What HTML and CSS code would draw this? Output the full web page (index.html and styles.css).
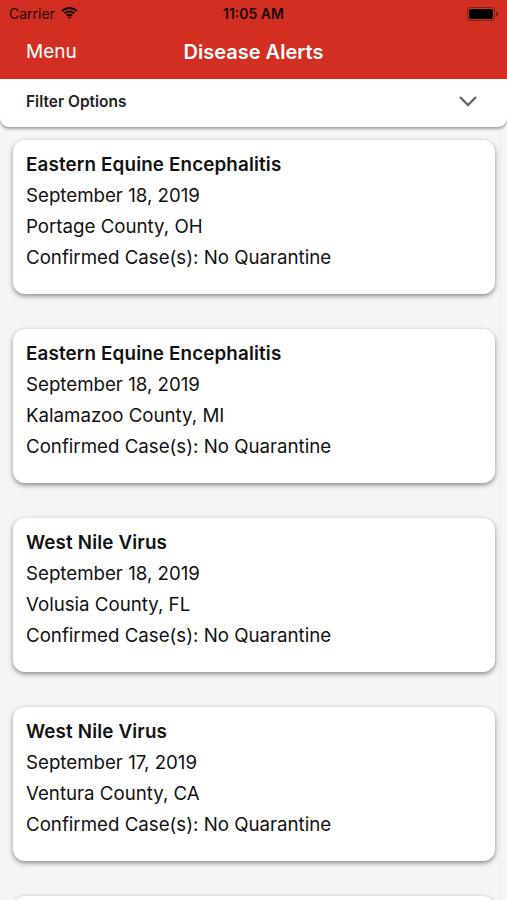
FILE: index.html
```html
<!DOCTYPE html>
<html lang="en">

<head>
    <meta charset="UTF-8">
    <meta name="viewport" content="width=device-width, initial-scale=1.0">
    <title>Disease Alerts</title>
    <link rel="stylesheet" href="styles.css">
</head>

<body>
    <div class="header">
        <div class="status-bar">
            <div class="carrier">
                Carrier
                <svg class="wifi" width="17" height="12" viewBox="0 0 17 12">
                    <path d="M8.5 2.2c2.6 0 5 1 6.8 2.7l1.4-1.5C14.5 1.3 11.6 0 8.5 0S2.5 1.3.3 3.4l1.4 1.5C3.5 3.2 5.9 2.2 8.5 2.2z" fill="#1a0a08" />
                    <path d="M8.5 5.6c1.6 0 3 .6 4.1 1.6l1.4-1.5C12.6 4.4 10.6 3.5 8.5 3.5S4.4 4.4 3 5.7l1.4 1.5c1.1-1 2.5-1.6 4.1-1.6z" fill="#1a0a08" />
                    <path d="M8.5 8.9c.8 0 1.4.3 2 .7l1.4-1.5c-.9-.8-2.1-1.3-3.4-1.3S6 7.3 5.1 8.1l1.4 1.5c.6-.4 1.2-.7 2-.7z" fill="#1a0a08" />
                    <path d="M8.5 12l1.6-1.7c-.4-.4-1-.6-1.6-.6s-1.2.2-1.6.6z" fill="#1a0a08" />
                </svg>
            </div>
            <div class="time">11:05 AM</div>
            <div class="battery">
                <span class="battery-body"><span class="battery-level"></span></span>
                <span class="battery-tip"></span>
            </div>
        </div>
        <div class="nav-bar">
            <span class="nav-menu">Menu</span>
            <span class="nav-title">Disease Alerts</span>
        </div>
    </div>

    <div class="filter">
        <span class="filter-label">Filter Options</span>
        <svg class="chevron" width="20" height="12" viewBox="0 0 20 12">
            <path d="M2 2l8 8 8-8" fill="none" stroke="#666" stroke-width="2.4" />
        </svg>
    </div>

    <div class="list">
        <div class="card">
            <div class="card-title">Eastern Equine Encephalitis</div>
            <div class="card-line">September 18, 2019</div>
            <div class="card-line">Portage County, OH</div>
            <div class="card-line">Confirmed Case(s): No Quarantine</div>
        </div>
        <div class="card">
            <div class="card-title">Eastern Equine Encephalitis</div>
            <div class="card-line">September 18, 2019</div>
            <div class="card-line">Kalamazoo County, MI</div>
            <div class="card-line">Confirmed Case(s): No Quarantine</div>
        </div>
        <div class="card">
            <div class="card-title">West Nile Virus</div>
            <div class="card-line">September 18, 2019</div>
            <div class="card-line">Volusia County, FL</div>
            <div class="card-line">Confirmed Case(s): No Quarantine</div>
        </div>
        <div class="card">
            <div class="card-title">West Nile Virus</div>
            <div class="card-line">September 17, 2019</div>
            <div class="card-line">Ventura County, CA</div>
            <div class="card-line">Confirmed Case(s): No Quarantine</div>
        </div>
        <!-- next card, only its top edge shows -->
        <div class="card"></div>
    </div>
</body>

</html>
```

FILE: styles.css
```css
body {
    margin: 0;
    padding: 0;
    background-color: #f5f5f5;
    font-family: Inter, "Liberation Sans", sans-serif;
    color: #111;
    overflow: hidden;
    height: 900px;
}

/* Red top area */
.header {
    background-color: #d22e21;
    height: 79px;
}

.status-bar {
    display: flex;
    align-items: center;
    justify-content: space-between;
    height: 27px;
    padding: 0 9px;
    color: #1a0a08;
    font-size: 14px;
}

.carrier {
    display: flex;
    align-items: center;
    gap: 6px;
    width: 100px;
}

.wifi {
    margin-top: -2px;
}

.time {
    font-weight: 600;
    font-size: 14px;
}

.battery {
    display: flex;
    align-items: center;
    justify-content: flex-end;
    width: 100px;
}

.battery-body {
    display: block;
    width: 24px;
    height: 10px;
    border: 1px solid #7a241b;
    border-radius: 3px;
    padding: 1px;
}

.battery-level {
    display: block;
    width: 100%;
    height: 100%;
    background-color: #000;
    border-radius: 2px;
}

.battery-tip {
    display: block;
    width: 2px;
    height: 4px;
    background-color: #7a241b;
    border-radius: 0 1px 1px 0;
    margin-left: 1px;
}

.nav-bar {
    position: relative;
    height: 52px;
    display: flex;
    align-items: center;
    justify-content: center;
    color: #fff;
    font-size: 19px;
}

.nav-menu {
    position: absolute;
    left: 26px;
    top: 13px;
}

.nav-title {
    font-weight: 600;
    font-size: 20px;
    margin-top: -2px;
}

/* Filter bar */
.filter {
    display: flex;
    align-items: center;
    justify-content: space-between;
    height: 48px;
    padding: 0 29px 0 26px;
    background-color: #fff;
    border-radius: 0 0 9px 9px;
    box-shadow: 0 2px 3px rgba(0, 0, 0, 0.35);
    position: relative;
    z-index: 1;
}

.filter-label {
    font-size: 15.5px;
    font-weight: 600;
    color: #222;
    margin-top: -3px;
}

.chevron {
    margin-top: -4px;
}

/* Alert cards */
.list {
    padding: 13px 5px 0 13px;
    margin-right: 6px;
    border-right: 1px solid #ececec;
    height: 100%;
}

.card {
    box-sizing: border-box;
    height: 154px;
    margin-bottom: 35px;
    padding: 9px 13px 0 13px;
    background-color: #fff;
    border-radius: 12px;
    box-shadow: 0 2px 5px rgba(0, 0, 0, 0.45);
}

.card-title {
    font-size: 18.8px;
    font-weight: 600;
    line-height: 31px;
    letter-spacing: 0.15px;
}

.card-line {
    font-size: 18.7px;
    line-height: 31px;
}
```
